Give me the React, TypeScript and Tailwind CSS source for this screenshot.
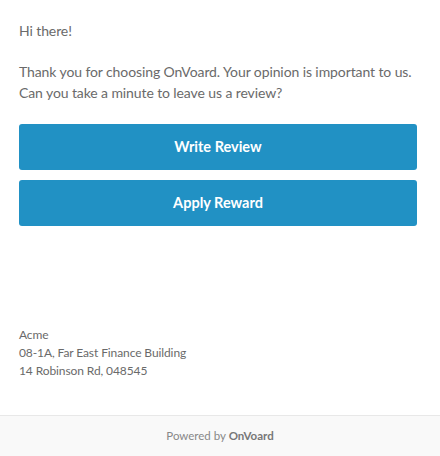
import React from "react";

export default function App() {
  return (
    <div className="w-[440px] h-[456px] bg-white flex flex-col" style={{ fontFamily: "Lato, 'Noto Sans', sans-serif" }}>
      <div className="flex-1 px-[19px] pt-[20px]">
        <p className="text-[14px] leading-[21px] text-[#6a6a6a] tracking-[-0.1px]">Hi there!</p>
        <p className="mt-[20px] text-[14px] leading-[21px] text-[#6a6a6a] tracking-[-0.1px]">
          Thank you for choosing OnVoard. Your opinion is important to us.
          <br />
          Can you take a minute to leave us a review?
        </p>
        <div className="mt-[21px] flex flex-col gap-[10px] w-[398px]">
          <button className="h-[46px] rounded-[3px] bg-[#2191c4] text-white font-bold text-[14.5px]">Write Review</button>
          <button className="h-[46px] rounded-[3px] bg-[#2191c4] text-white font-bold text-[14.5px]">Apply Reward</button>
        </div>
        <div className="mt-[100px] text-[12px] leading-[18px] text-[#6a6a6a] tracking-[-0.1px]">
          <div>Acme</div>
          <div>08-1A, Far East Finance Building</div>
          <div>14 Robinson Rd, 048545</div>
        </div>
      </div>
      <div className="h-[41px] border-t border-[#e8e8e8] bg-[#f9f9f9] flex items-center justify-center text-[11.5px] text-[#888]">
        <span>
          Powered by <span className="font-bold text-[#777]">OnVoard</span>
        </span>
      </div>
    </div>
  );
}
